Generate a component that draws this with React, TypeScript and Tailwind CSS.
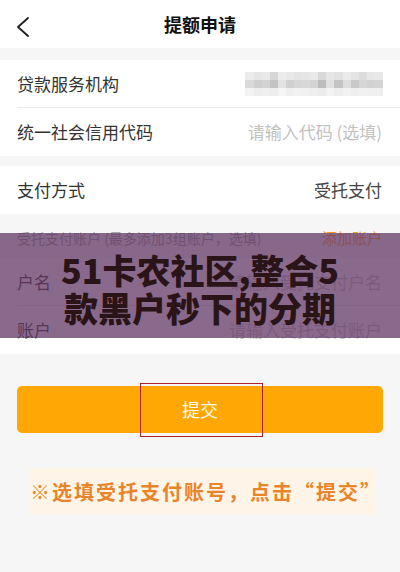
const mosaic: string[][] = [
  ['#ebebeb', '#e6e6e6', '#e9e9e9', '#d6d6d6', '#ececec', '#e8e8e8', '#e4e4e4', '#e6e6e6', '#e9e9e9', '#d8d8d8', '#e6e6e6', '#e2e2e2', '#ebebeb', '#e4e4e4', '#dcdcdc', '#e6e6e6', '#e8e8e8'],
  ['#d9d9d9', '#cfcfcf', '#d3d3d3', '#c3c3c3', '#e2e2e2', '#d0d0d0', '#d6d6d6', '#d8d8d8', '#d4d4d4', '#bdbdbd', '#e0e0e0', '#c4c4c4', '#dedede', '#c9c9c9', '#d6d6d6', '#d2d2d2', '#d4d4d4'],
  ['#f3f3f3', '#eeeeee', '#f0f0f0', '#ededed', '#f5f5f5', '#efefef', '#f2f2f2', '#f1f1f1', '#eeeeee', '#ebebeb', '#f3f3f3', '#eeeeee', '#f2f2f2', '#efefef', '#f1f1f1', '#f0f0f0', '#efefef'],
];

function Row({ label, value, muted, divider }: { label: string; value?: string; muted?: boolean; divider?: boolean }) {
  return (
    <div className="pl-[17px]">
      <div className={`flex h-[48px] items-center justify-between pr-[18px] ${divider ? 'border-b border-[#e8e8e8]' : ''}`}>
        <span className="text-[17px] text-[#333]">{label}</span>
        {value ? <span className={`text-[17px] ${muted ? 'text-[#c2c2c2]' : 'text-[#444]'}`}>{value}</span> : null}
      </div>
    </div>
  );
}

export default function App() {
  return (
    <div
      className="relative h-[572px] w-[400px] overflow-hidden bg-[#f6f6f6]"
      style={{ fontFamily: '"Noto Sans CJK SC", "Noto Sans", sans-serif' }}
    >
      <div className="relative flex h-[48px] items-center justify-center bg-white">
        <svg className="absolute left-[15px] top-[16px]" width="16" height="22" viewBox="0 0 16 22" fill="none">
          <polyline points="13,2 3,11 13,20" stroke="#222" strokeWidth="1.9" strokeLinecap="round" strokeLinejoin="round" />
        </svg>
        <span className="text-[18px] font-bold text-[#111]">提额申请</span>
      </div>

      <div className="mt-[12px] bg-white">
        <div className="pl-[17px]">
          <div className="flex h-[48px] items-center justify-between border-b border-[#e8e8e8] pr-[17px]">
            <span className="text-[17px] text-[#333]">贷款服务机构</span>
            <div className="flex flex-col">
              {mosaic.map((row, i) => (
                <div key={i} className="flex">
                  {row.map((c, j) => (
                    <div key={j} className="h-[8px] w-[8.1px]" style={{ backgroundColor: c }} />
                  ))}
                </div>
              ))}
            </div>
          </div>
        </div>
        <Row label="统一社会信用代码" value="请输入代码 (选填)" muted />
      </div>

      <div className="mt-[10px] bg-white">
        <Row label="支付方式" value="受托支付" />
      </div>

      <div className="flex h-[44px] items-center justify-between pl-[17px] pr-[18px] pt-[4px]">
        <span className="text-[14px] text-[#999]">受托支付账户 (最多添加3组账户，选填)</span>
        <span className="text-[15px] text-[#ff9a1f]">添加账户</span>
      </div>

      <div className="bg-white">
        <Row label="户名" value="请输入受托支付户名" muted divider />
        <Row label="账户" value="请输入受托支付账户" muted />
      </div>

      <div className="relative mx-[17px] mt-[32px]">
        <button
          type="button"
          className="flex h-[47px] w-full items-center justify-center rounded-[5px] bg-[#ffa704] text-[18px] text-[#fffbe8]"
        >
          提交
        </button>
        <div className="absolute left-[123px] top-[-3px] h-[54px] w-[123px] border-[1.5px] border-[#b02028]" />
      </div>

      <div className="ml-[30px] mt-[35px] flex h-[47px] w-[345px] items-center justify-center bg-[#fff4e8]">
        <span className="text-[20px] font-bold tracking-[2px] text-[#e8842a]">※选填受托支付账号，点击“提交”</span>
      </div>

      <div className="absolute left-0 top-[233px] flex h-[105px] w-full flex-col items-center justify-center bg-[rgba(99,56,102,0.75)] pt-[6px]">
        <span className="text-[34px] font-black leading-[38px] text-[#2b1418]">51卡农社区,整合5</span>
        <span className="text-[34px] font-black leading-[38px] text-[#2b1418]">款黑户秒下的分期</span>
      </div>
    </div>
  );
}
